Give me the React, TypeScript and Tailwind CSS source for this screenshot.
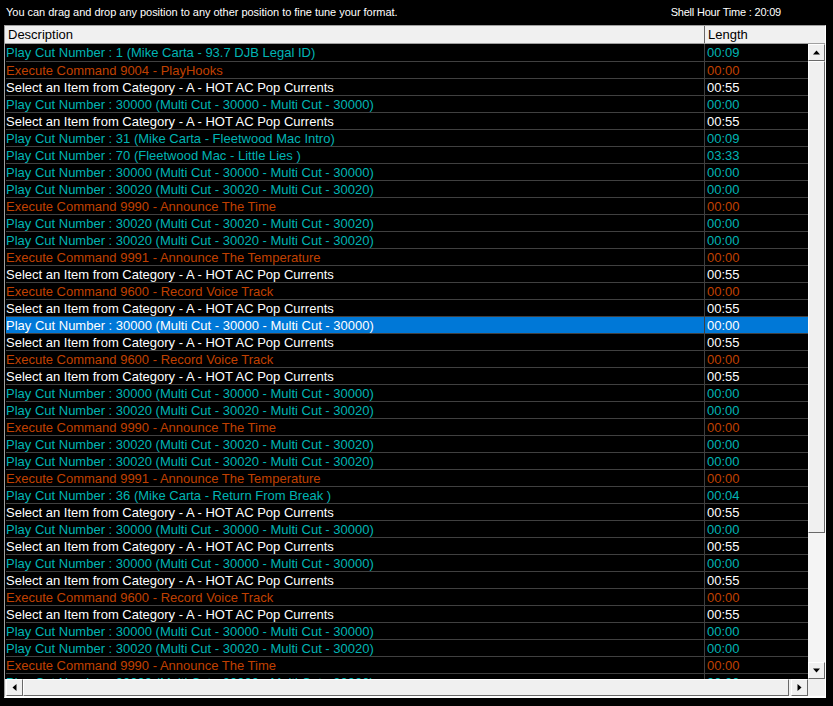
const cat = 'Select an Item from Category - A - HOT AC Pop Currents';
const m0 = 'Play Cut Number : 30000 (Multi Cut - 30000 - Multi Cut - 30000)';
const m2 = 'Play Cut Number : 30020 (Multi Cut - 30020 - Multi Cut - 30020)';
const time = 'Execute Command 9990 - Announce The Time';
const temp = 'Execute Command 9991 - Announce The Temperature';
const voice = 'Execute Command 9600 - Record Voice Track';

type Row = [string, string, 'c' | 'r' | 'w' | 's'];

const rows: Row[] = [
    ['Play Cut Number : 1 (Mike Carta - 93.7 DJB Legal ID)', '00:09', 'c'],
    ['Execute Command 9004 - PlayHooks', '00:00', 'r'],
    [cat, '00:55', 'w'],
    [m0, '00:00', 'c'],
    [cat, '00:55', 'w'],
    ['Play Cut Number : 31 (Mike Carta - Fleetwood Mac Intro)', '00:09', 'c'],
    ['Play Cut Number : 70 (Fleetwood Mac - Little Lies )', '03:33', 'c'],
    [m0, '00:00', 'c'],
    [m2, '00:00', 'c'],
    [time, '00:00', 'r'],
    [m2, '00:00', 'c'],
    [m2, '00:00', 'c'],
    [temp, '00:00', 'r'],
    [cat, '00:55', 'w'],
    [voice, '00:00', 'r'],
    [cat, '00:55', 'w'],
    [m0, '00:00', 's'],
    [cat, '00:55', 'w'],
    [voice, '00:00', 'r'],
    [cat, '00:55', 'w'],
    [m0, '00:00', 'c'],
    [m2, '00:00', 'c'],
    [time, '00:00', 'r'],
    [m2, '00:00', 'c'],
    [m2, '00:00', 'c'],
    [temp, '00:00', 'r'],
    ['Play Cut Number : 36 (Mike Carta - Return From Break )', '00:04', 'c'],
    [cat, '00:55', 'w'],
    [m0, '00:00', 'c'],
    [cat, '00:55', 'w'],
    [m0, '00:00', 'c'],
    [cat, '00:55', 'w'],
    [voice, '00:00', 'r'],
    [cat, '00:55', 'w'],
    [m0, '00:00', 'c'],
    [m2, '00:00', 'c'],
    [time, '00:00', 'r'],
    [m0, '00:00', 'c'],
];

const tone = {
    c: 'text-[#00b4b4]',
    r: 'text-[#c04000]',
    w: 'text-white',
    s: 'text-white bg-[#0078d7]',
};

function ScrollBtn({ dir }: { dir: 'up' | 'down' | 'left' | 'right' }) {
    const shape = {
        up: 'M0 4 L3.5 0 L7 4 Z',
        down: 'M0 0 L7 0 L3.5 4 Z',
        left: 'M4 0 L4 7 L0 3.5 Z',
        right: 'M0 0 L0 7 L4 3.5 Z',
    }[dir];
    return (
        <div className="w-[17px] h-[17px] shrink-0 flex items-center justify-center bg-[#f0f0f0] border-r border-b border-r-[#696969] border-b-[#696969] border-l border-t border-l-white border-t-white">
            <svg width="7" height="7" viewBox="0 0 7 7" className="block">
                <path d={shape} fill="#000" transform={dir === 'up' || dir === 'down' ? 'translate(0 1.5)' : 'translate(1.5 0)'} />
            </svg>
        </div>
    );
}

export default function App() {
    return (
        <div className="w-[833px] h-[706px] bg-black overflow-hidden font-['Liberation_Sans',Arial,sans-serif]">
            <div className="h-[25px] pl-[6px] pr-[52px] flex items-center justify-between text-[11px] text-white">
                <span className="tracking-[-0.03px]">You can drag and drop any position to any other position to fine tune your format.</span>
                <span className="tracking-[-0.2px]">Shell Hour Time : 20:09</span>
            </div>
            <div className="ml-[4px] w-[822px] h-[673px] border-l border-t border-[#a0a0a0] border-r border-r-white border-b-2 border-b-white flex flex-col bg-[#f0f0f0]">
                <div className="h-[18px] shrink-0 flex text-[13px] leading-[18px] text-black bg-[#f0f0f0] border-b border-b-[#a0a0a0]">
                    <div className="w-[700px] pl-[3px] border-r border-r-[#696969]">Description</div>
                    <div className="flex-1 pl-[3px]">Length</div>
                </div>
                <div className="flex-1 flex min-h-0">
                    <div className="w-[803px] flex flex-col min-h-0">
                        <div className="flex-1 min-h-0 overflow-hidden bg-black pl-px">
                            {rows.map(([desc, len, c], i) => (
                                <div key={i} className={`${i === 0 ? 'h-[18px]' : 'h-[17px]'} flex text-[13px] leading-[18px] border-b border-b-[#404040] ${tone[c]}`}>
                                    <div className="w-[699px] shrink-0 whitespace-nowrap overflow-hidden border-r border-r-[#404040]">{desc}</div>
                                    <div className="flex-1 pl-[2px] overflow-hidden">{len}</div>
                                </div>
                            ))}
                        </div>
                        <div className="h-[17px] shrink-0 flex pl-px">
                            <ScrollBtn dir="left" />
                            <div className="flex-1 mr-[2px] bg-[#f0f0f0] border-r border-b border-r-[#696969] border-b-[#696969] border-l border-t border-l-white border-t-white" />
                            <ScrollBtn dir="right" />
                        </div>
                    </div>
                    <div className="w-[17px] shrink-0 flex flex-col bg-[#f4f4f4] h-[635px]">
                        <ScrollBtn dir="up" />
                        <div className="h-[472px] shrink-0 bg-[#f0f0f0] border-r border-b border-r-[#696969] border-b-[#696969] border-l border-t border-l-white border-t-white" />
                        <div className="flex-1" />
                        <ScrollBtn dir="down" />
                    </div>
                </div>
            </div>
        </div>
    );
}
